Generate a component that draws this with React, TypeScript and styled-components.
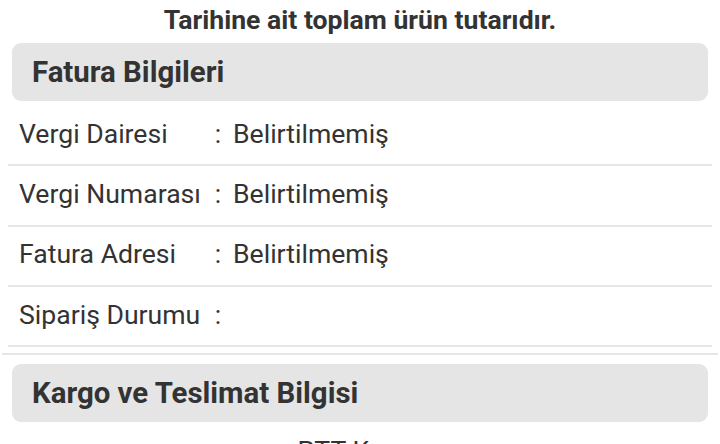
import React from "react";
import styled, { createGlobalStyle } from "styled-components";

const Global = createGlobalStyle`
  html, body { margin: 0; padding: 0; background: #fff; }
  body { font-family: Roboto, "Liberation Sans", Arial, sans-serif; color: #333; overflow: hidden; }
`;

const Page = styled.div`
  width: 720px;
  padding: 0 2px;
  box-sizing: border-box;
`;

const Lead = styled.div`
  font-size: 26.6px;
  font-weight: 700;
  text-align: center;
  line-height: 40px;
  height: 43px;
  color: #333;
`;

const SectionHeader = styled.div`
  margin: 0 10px;
  height: 58px;
  background: #e5e5e5;
  border-radius: 9px;
  display: flex;
  align-items: center;
  padding-left: 20px;
  font-size: 29.4px;
  font-weight: 700;
  color: #333;
`;

const Table = styled.div`
  margin: 5px 6px 0;
`;

const Row = styled.div`
  display: grid;
  grid-template-columns: 200px 20px 1fr;
  align-items: center;
  box-sizing: content-box;
  height: 54.3px;
  padding-bottom: 4px;
  border-bottom: 2px solid #e6e6e6;
  font-size: 26.6px;
  color: #333;
`;

const Label = styled.div`
  padding-left: 11px;
  white-space: nowrap;
`;

const Colon = styled.div`
  text-align: center;
`;

const Value = styled.div`
  padding-left: 5px;
`;

const Divider = styled.div`
  height: 2px;
  background: #e6e6e6;
  margin: 6px 0 9px;
`;

const Centered = styled.div`
  text-align: center;
  font-size: 26.6px;
  color: #333;
  margin-top: 12px;
  line-height: 34px;
`;

const rows: [string, string][] = [
  ["Vergi Dairesi", "Belirtilmemiş"],
  ["Vergi Numarası", "Belirtilmemiş"],
  ["Fatura Adresi", "Belirtilmemiş"],
  ["Sipariş Durumu", ""],
];

export default function App() {
  return (
    <Page>
      <Global />
      <Lead>Tarihine ait toplam ürün tutarıdır.</Lead>
      <SectionHeader>Fatura Bilgileri</SectionHeader>
      <Table>
        {rows.map(([l, v]) => (
          <Row key={l}>
            <Label>{l}</Label>
            <Colon>:</Colon>
            <Value>{v}</Value>
          </Row>
        ))}
      </Table>
      <Divider />
      <SectionHeader>Kargo ve Teslimat Bilgisi</SectionHeader>
      <Centered>PTT Kargo</Centered>
    </Page>
  );
}
